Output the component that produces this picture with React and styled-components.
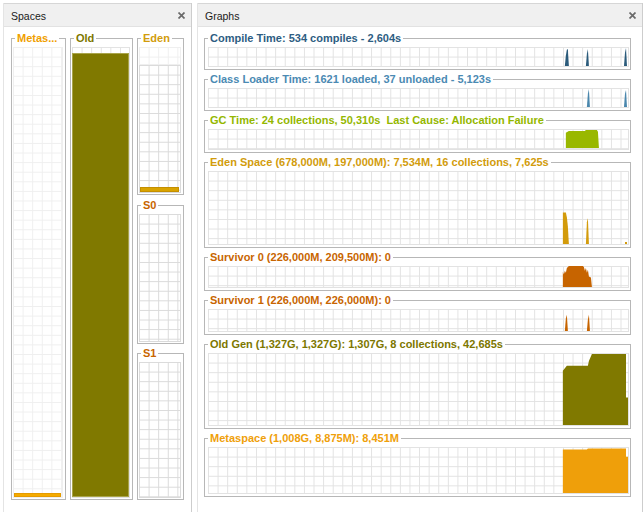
import React from 'react'
import styled, { createGlobalStyle } from 'styled-components'

const GlobalStyle = createGlobalStyle`
  html, body { margin: 0; padding: 0; background: #fff; }
  body { font-family: "Liberation Sans", Arial, sans-serif; }
`

const Window = styled.div`
  width: 643px;
  height: 512px;
  box-sizing: border-box;
  padding: 3px 0 0 3px;
  display: flex;
  gap: 5px;
  overflow: hidden;
  background: #fff;
`

const Panel = styled.section`
  width: ${p => p.$width}px;
  flex: none;
  display: flex;
  flex-direction: column;
  box-sizing: border-box;
  border-right: 1px solid #cdcdcd;
  border-left: 1px solid #e4e4e4;
`

const Header = styled.div`
  height: 24px;
  flex: none;
  box-sizing: border-box;
  display: flex;
  align-items: center;
  justify-content: space-between;
  padding: 1px 6px 0 7px;
  background: #f0f0f0;
  border-top: 1px solid #d6d6d6;
  border-bottom: 1px solid #e2e2e2;
  font-size: 10.5px;
  color: #1a1a1a;
`

const Close = styled.svg`
  width: 7px;
  height: 7px;
  display: block;
`

const SpacesBody = styled.div`
  display: flex;
  gap: 4px;
  padding: 5px 0 0 7px;
`

const Column = styled.div`
  width: ${p => p.$width}px;
  display: flex;
  flex-direction: column;
  gap: 3.5px;
`

const GraphsBody = styled.div`
  display: flex;
  flex-direction: column;
  gap: 3px;
  padding: 5px 11px 0 6px;
`

const Box = styled.fieldset`
  margin: 0;
  min-width: 0;
  box-sizing: border-box;
  border: 1px solid #b7b7b7;
  padding: ${p => (p.$graph ? '2px 1px 2px 3px' : '2px 2px 1px 1px')};
`

const Legend = styled.legend`
  padding: 0 2px;
  margin-left: ${p => (p.$graph ? 0 : 2)}px;
  font: bold 11px/13px "Liberation Sans", Arial, sans-serif;
  color: ${p => p.$color};
  white-space: pre;
`

const tones = { light: '#efefef', mid: '#e2e2e2', dark: '#dadada' }

const Grid = styled.div`
  height: ${p => p.$h}px;
  box-sizing: border-box;
  background-color: #fff;
  background-image:
    linear-gradient(90deg, ${p => tones[p.$tone || 'mid']} 1px, transparent 1px),
    linear-gradient(180deg, ${p => tones[p.$tone || 'mid']} 1px, transparent 1px);
  background-size: 9.6px 9.6px;
  border-right: 1px solid ${p => tones[p.$tone || 'mid']};
  border-bottom: 1px solid ${p => tones[p.$tone || 'mid']};
  display: flex;
  flex-direction: column;
  justify-content: flex-end;
`

const Level = styled.div`
  height: ${p => p.$h}px;
  flex: none;
  box-sizing: border-box;
  margin: 0 ${p => p.$inset}px 0 ${p => p.$inset}px;
  background: ${p => p.$color};
  border: 1px solid ${p => p.$edge};
`

const Plot = styled.svg`
  display: block;
  width: 100%;
  height: 100%;
`

const CloseIcon = () => (
  <Close viewBox="0 0 7 7">
    <path d="M0.5 0.5L6.5 6.5M6.5 0.5L0.5 6.5" stroke="#6a6a6a" strokeWidth="1.7" />
  </Close>
)

const graphs = [
  {
    title: 'Compile Time: 534 compiles - 2,604s',
    color: '#2d5d82',
    fill: '#2b5b7b',
    h: 20,
    shapes: [
      '356,20 357,9 358,3 359,2 360,20',
      '377,20 378,7 379,2 380,20',
      '415,20 416,6 417,1 418,20',
    ],
  },
  {
    title: 'Class Loader Time: 1621 loaded, 37 unloaded - 5,123s',
    color: '#4b8ab3',
    fill: '#4a87ad',
    h: 20,
    shapes: ['378,20 379,6 380,1 381,20', '415,20 416,6 417,2 418,20'],
  },
  {
    title: 'GC Time: 24 collections, 50,310s  Last Cause: Allocation Failure',
    color: '#94b700',
    fill: '#99b800',
    h: 21,
    shapes: ['357,20 357,4 360,2 376,2 377,1 388,1 389,3 390,20'],
  },
  {
    title: 'Eden Space (678,000M, 197,000M): 7,534M, 16 collections, 7,625s',
    color: '#d29c0c',
    fill: '#d39b0b',
    h: 74,
    shapes: [
      '354,74 354,42 357,42 358,47 359,56 360,74',
      '377,74 378,52 379,48 380,74',
      '416,74 416,72 418,72 418,74',
    ],
  },
  {
    title: 'Survivor 0 (226,000M, 209,500M): 0',
    color: '#c86500',
    fill: '#c76400',
    h: 22,
    shapes: [
      '354,22 354,6 355,9 356,5 357,7 358,2 360,0 374,0 375,1 376,5 377,2 378,7 379,4 380,11 382,12 383,22',
    ],
  },
  {
    title: 'Survivor 1 (226,000M, 226,000M): 0',
    color: '#c86500',
    fill: '#c76400',
    h: 23,
    shapes: ['356,23 357,10 358,6 359,23', '378,23 379,11 380,6 381,23'],
  },
  {
    title: 'Old Gen (1,327G, 1,327G): 1,307G, 8 collections, 42,685s',
    color: '#7d7700',
    fill: '#807900',
    h: 73,
    shapes: [
      '354,73 354,18 358,13 379,13 380,8 383,1 417,1 417,45 419,45 419,73',
    ],
  },
  {
    title: 'Metaspace (1,008G, 8,875M): 8,451M',
    color: '#efa00a',
    fill: '#ef9f0a',
    h: 47,
    shapes: ['354,47 354,2.5 378,2.5 379,1.5 417,1.5 417,10 419,10 419,47'],
  },
]

const Graph = ({ title, color, fill, h, shapes }) => (
  <Box $graph>
    <Legend $graph $color={color}>{title}</Legend>
    <Grid $h={h}>
      <Plot viewBox={`0 0 419 ${h}`} preserveAspectRatio="none">
        {shapes.map((pts, i) => (
          <polygon key={i} points={pts} fill={fill} />
        ))}
      </Plot>
    </Grid>
  </Box>
)

export default function App() {
  return (
    <>
      <GlobalStyle />
      <Window>
        <Panel $width={189}>
          <Header>
            <span>Spaces</span>
            <CloseIcon />
          </Header>
          <SpacesBody>
            <Column $width={55}>
              <Box>
                <Legend $color="#f0a000">Metas...</Legend>
                <Grid $tone="light" $h={451}>
                  <Level $h={4} $inset={1} $color="#f5ab00" $edge="#e59b00" />
                </Grid>
              </Box>
            </Column>
            <Column $width={63}>
              <Box>
                <Legend $color="#7d7700">Old</Legend>
                <Grid $h={451}>
                  <Level $h={444} $inset={0} $color="#807900" $edge="#a9a44a" />
                </Grid>
              </Box>
            </Column>
            <Column $width={47}>
              <Box>
                <Legend $color="#d29c0c">Eden</Legend>
                <Grid $tone="light" $h={18} />
                <Grid $tone="dark" $h={128}>
                  <Level $h={5} $inset={1} $color="#d9a300" $edge="#c48f00" />
                </Grid>
              </Box>
              <Box>
                <Legend $color="#c86500">S0</Legend>
                <Grid $tone="dark" $h={128} />
              </Box>
              <Box>
                <Legend $color="#c86500">S1</Legend>
                <Grid $tone="dark" $h={136} />
              </Box>
            </Column>
          </SpacesBody>
        </Panel>
        <Panel $width={446}>
          <Header>
            <span>Graphs</span>
            <CloseIcon />
          </Header>
          <GraphsBody>
            {graphs.map(g => (
              <Graph key={g.title} {...g} />
            ))}
          </GraphsBody>
        </Panel>
      </Window>
    </>
  )
}
